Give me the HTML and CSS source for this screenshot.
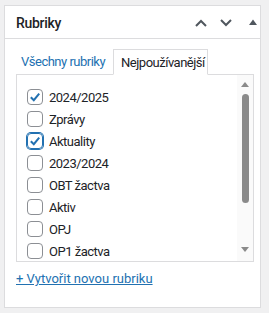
FILE: index.html
```html
<!DOCTYPE html>
<html lang="cs">
<head>
    <meta charset="UTF-8">
    <meta name="viewport" content="width=device-width, initial-scale=1.0">
    <link rel="stylesheet" href="styles.css">
    <title>Rubriky</title>
</head>
<body>
    <div class="postbox">
        <div class="postbox-header">
            <h2>Rubriky</h2>
            <div class="handle-actions">
                <svg class="chevron" width="12" height="8" viewBox="0 0 12 8"><path d="M1 7 L6 2 L11 7" fill="none" stroke="#50575e" stroke-width="2"/></svg>
                <svg class="chevron" width="12" height="8" viewBox="0 0 12 8"><path d="M1 1 L6 6 L11 1" fill="none" stroke="#50575e" stroke-width="2"/></svg>
                <svg class="toggle" width="8" height="6" viewBox="0 0 8 6"><path d="M0 6 L4 0.5 L8 6 Z" fill="#50575e"/></svg>
            </div>
        </div>

        <div class="inside">
            <ul class="category-tabs">
                <li><a href="#">Všechny rubriky</a></li>
                <li class="tabs">Nejpoužívanější</li>
            </ul>

            <div class="tabs-panel">
                <ul class="checklist">
                    <li><span class="check checked"><svg width="16" height="16" viewBox="0 0 16 16"><path d="M3.8 8.2 L6.8 11.2 L12.2 4.6" fill="none" stroke="#2271b1" stroke-width="2"/></svg></span>2024/2025</li>
                    <li><span class="check"></span>Zprávy</li>
                    <li><span class="check checked focus"><svg width="16" height="16" viewBox="0 0 16 16"><path d="M3.8 8.2 L6.8 11.2 L12.2 4.6" fill="none" stroke="#2271b1" stroke-width="2"/></svg></span>Aktuality</li>
                    <li><span class="check"></span>2023/2024</li>
                    <li><span class="check"></span>OBT žactva</li>
                    <li><span class="check"></span>Aktiv</li>
                    <li><span class="check"></span>OPJ</li>
                    <li><span class="check"></span>OP1 žactva</li>
                </ul>
                <div class="scrollbar">
                    <svg width="8" height="5" viewBox="0 0 8 5"><path d="M0 5 L4 0 L8 5 Z" fill="#8a8a8a"/></svg>
                    <div class="thumb"></div>
                    <svg class="down" width="8" height="5" viewBox="0 0 8 5"><path d="M0 0 L4 5 L8 0 Z" fill="#8a8a8a"/></svg>
                </div>
            </div>

            <p class="add-new"><a href="#">+ Vytvořit novou rubriku</a></p>
        </div>
    </div>
</body>
</html>
```

FILE: styles.css
```css
body {
    margin: 0;
    background-color: #f0f0f1;
    font-family: Roboto, "Liberation Sans", sans-serif;
    font-size: 13px;
    color: #1d2327;
}

.postbox {
    box-sizing: border-box;
    width: 257px;
    height: 303px;
    margin: 5px 0 0 4px;
    background-color: #ffffff;
    border: 1px solid #dcdcde;
}

.postbox-header {
    display: flex;
    align-items: center;
    justify-content: space-between;
    height: 30px;
    padding: 2px 0 0 11px;
    border-bottom: 1px solid #dcdcde;
}

.postbox-header h2 {
    margin: 0;
    font-size: 14px;
    font-weight: 500;
    letter-spacing: -0.3px;
}

.handle-actions {
    display: flex;
    align-items: center;
    gap: 12px;
    padding-right: 3px;
}

.handle-actions .chevron:first-child {
    margin-right: 1px;
}

.handle-actions .toggle {
    margin-left: 5px;
    margin-top: -2px;
}

.inside {
    padding: 10px 0 0 11px;
}

.category-tabs {
    display: flex;
    list-style: none;
    margin: 0;
    padding: 0;
    letter-spacing: -0.5px;
}

.category-tabs li {
    height: 24px;
    line-height: 25px;
    padding: 0 7px 0 5px;
}

.category-tabs a {
    color: #2271b1;
    text-decoration: none;
}

.category-tabs li.tabs {
    margin-left: 1px;
    padding: 0 2px 0 7px;
    border: 1px solid #dcdcde;
    border-bottom: 1px solid #ffffff;
    margin-bottom: -1px;
    position: relative;
    background-color: #ffffff;
}

.tabs-panel {
    display: flex;
    box-sizing: border-box;
    width: 238px;
    height: 188px;
    border: 1px solid #dcdcde;
    overflow: hidden;
}

.checklist {
    flex: 1;
    list-style: none;
    margin: 0;
    padding: 11px 0 0 10px;
    letter-spacing: -0.5px;
}

.checklist li {
    display: flex;
    align-items: center;
    gap: 6px;
    height: 22px;
}

.check {
    box-sizing: border-box;
    display: flex;
    width: 16px;
    height: 16px;
    border: 1px solid #8c8f94;
    border-radius: 4px;
    flex-shrink: 0;
}

.check svg {
    margin: -1px;
}

.check.focus {
    border-color: #2271b1;
    box-shadow: 0 0 0 1px #2271b1;
}

.scrollbar {
    display: flex;
    flex-direction: column;
    align-items: center;
    width: 16px;
    padding-top: 7px;
    background-color: #fafafa;
}

.scrollbar .thumb {
    width: 7px;
    height: 109px;
    margin-top: 7px;
    border-radius: 4px;
    background-color: #8a8a8a;
}

.scrollbar .down {
    margin-top: 44px;
}

.add-new {
    margin: 8px 0 0;
    line-height: 18px;
}

.add-new a {
    color: #2271b1;
    text-decoration: underline;
}
```
